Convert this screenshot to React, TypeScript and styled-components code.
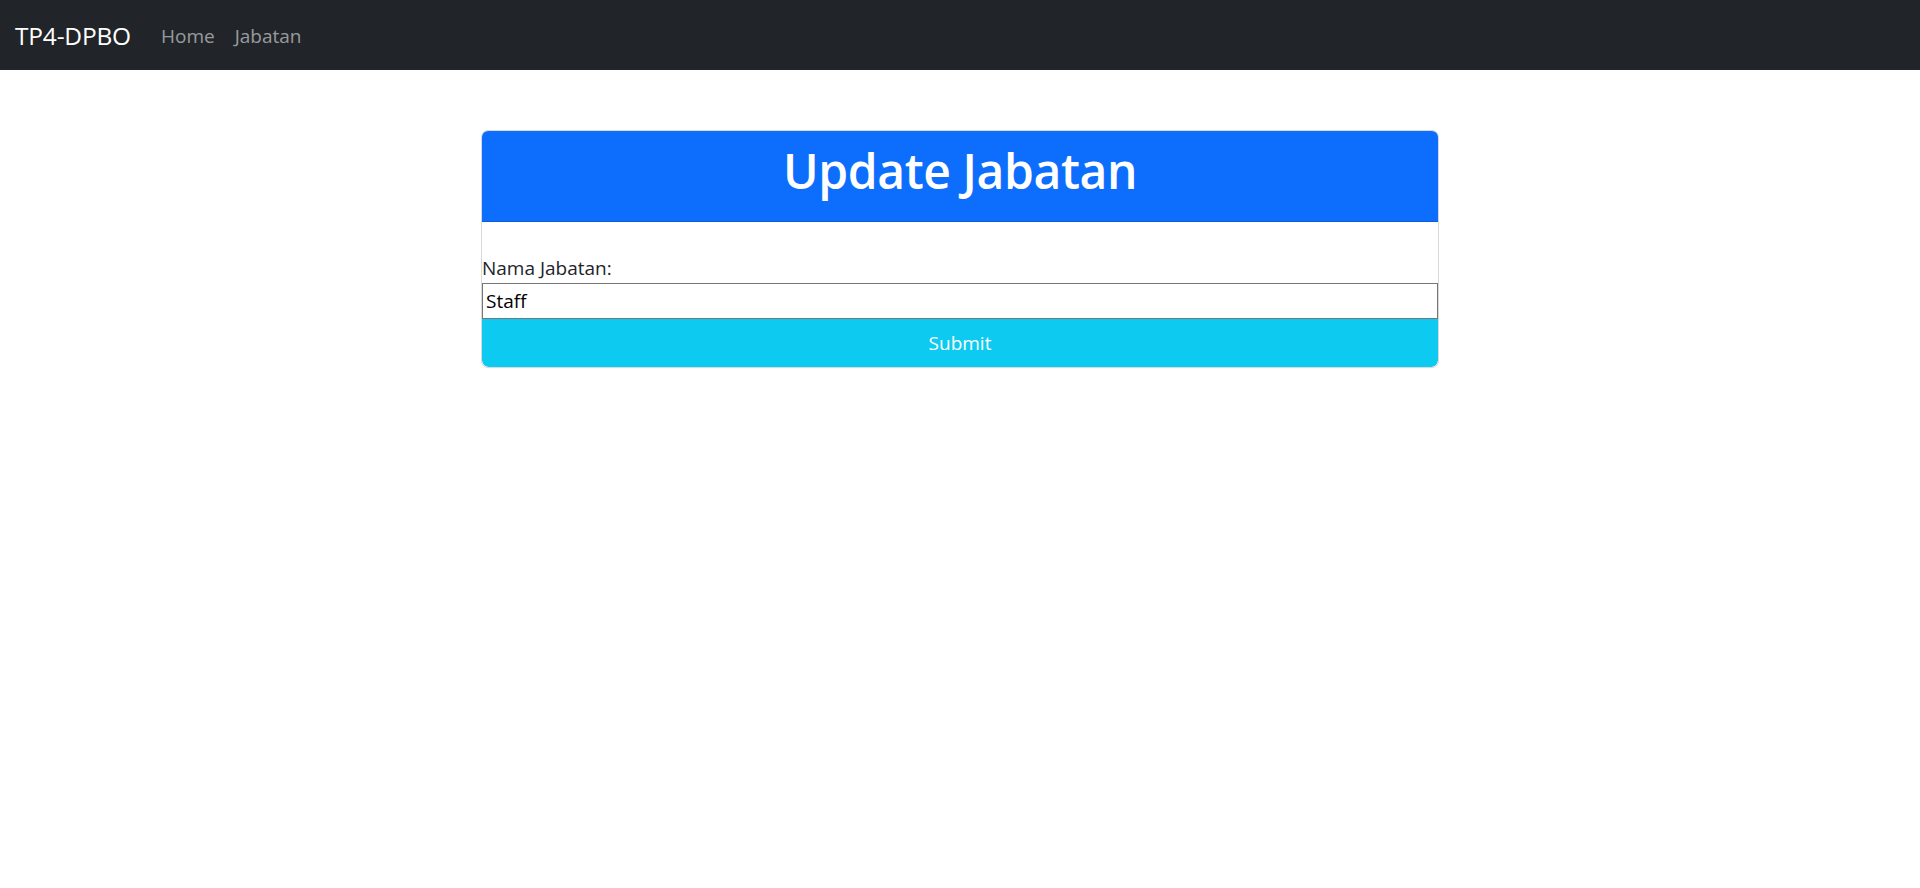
import React from "react";
import styled, { createGlobalStyle } from "styled-components";

const Global = createGlobalStyle`
  html, body { margin: 0; padding: 0; background: #fff; }
  body {
    font-family: "Open Sans", "Noto Sans", "Liberation Sans", sans-serif;
    font-size: 20px;
    line-height: 1.5;
    color: #212529;
  }
  * { box-sizing: border-box; }
`;

const Navbar = styled.nav`
  height: 70px;
  background: #212529;
  display: flex;
  align-items: center;
  padding: 2px 15px 0;
`;

const Brand = styled.a`
  color: #fff;
  font-size: 24.5px;
  text-decoration: none;
  margin-right: 20px;
  letter-spacing: -0.2px;
`;

const NavList = styled.div`
  display: flex;
  align-items: center;
`;

const NavLink = styled.a`
  color: rgba(255, 255, 255, 0.55);
  font-size: 19px;
  text-decoration: none;
  padding: 0 10px;
`;

const Main = styled.main`
  display: flex;
  justify-content: center;
  padding-top: 60px;
`;

const Card = styled.div`
  width: 958px;
  border: 1px solid rgba(0, 0, 0, 0.15);
  border-radius: 7px;
  overflow: hidden;
  display: flex;
  flex-direction: column;
`;

const CardHeader = styled.div`
  background: #0d6efd;
  color: #fff;
  height: 91px;
  display: flex;
  align-items: flex-start;
  justify-content: center;
  padding-top: 11px;
  border-bottom: 1px solid rgba(0, 0, 0, 0.15);
`;

const Title = styled.h1`
  margin: 0;
  font-size: 48px;
  font-weight: 600;
  line-height: 1.2;
  letter-spacing: -0.4px;
`;

const Form = styled.form`
  display: flex;
  flex-direction: column;
  padding-top: 31px;
`;

const Label = styled.label`
  font-size: 19px;
  line-height: 30px;
  color: #212529;
`;

const Input = styled.input`
  height: 36px;
  border: 1px solid #767676;
  border-radius: 0;
  font-family: inherit;
  font-size: 19px;
  color: #000;
  padding: 0 3px;
  margin: 0;
  outline: none;
`;

const Button = styled.button`
  height: 48px;
  background: #0dcaf0;
  border: none;
  border-radius: 0 0 7px 7px;
  color: #fff;
  font-family: inherit;
  font-size: 19px;
  cursor: pointer;
`;

export default function App() {
  return (
    <>
      <Global />
      <Navbar>
        <Brand href="#">TP4-DPBO</Brand>
        <NavList>
          <NavLink href="#">Home</NavLink>
          <NavLink href="#">Jabatan</NavLink>
        </NavList>
      </Navbar>
      <Main>
        <Card>
          <CardHeader>
            <Title>Update Jabatan</Title>
          </CardHeader>
          <Form onSubmit={(e) => e.preventDefault()}>
            <Label htmlFor="nama">Nama Jabatan:</Label>
            <Input id="nama" defaultValue="Staff" />
            <Button type="submit">Submit</Button>
          </Form>
        </Card>
      </Main>
    </>
  );
}
